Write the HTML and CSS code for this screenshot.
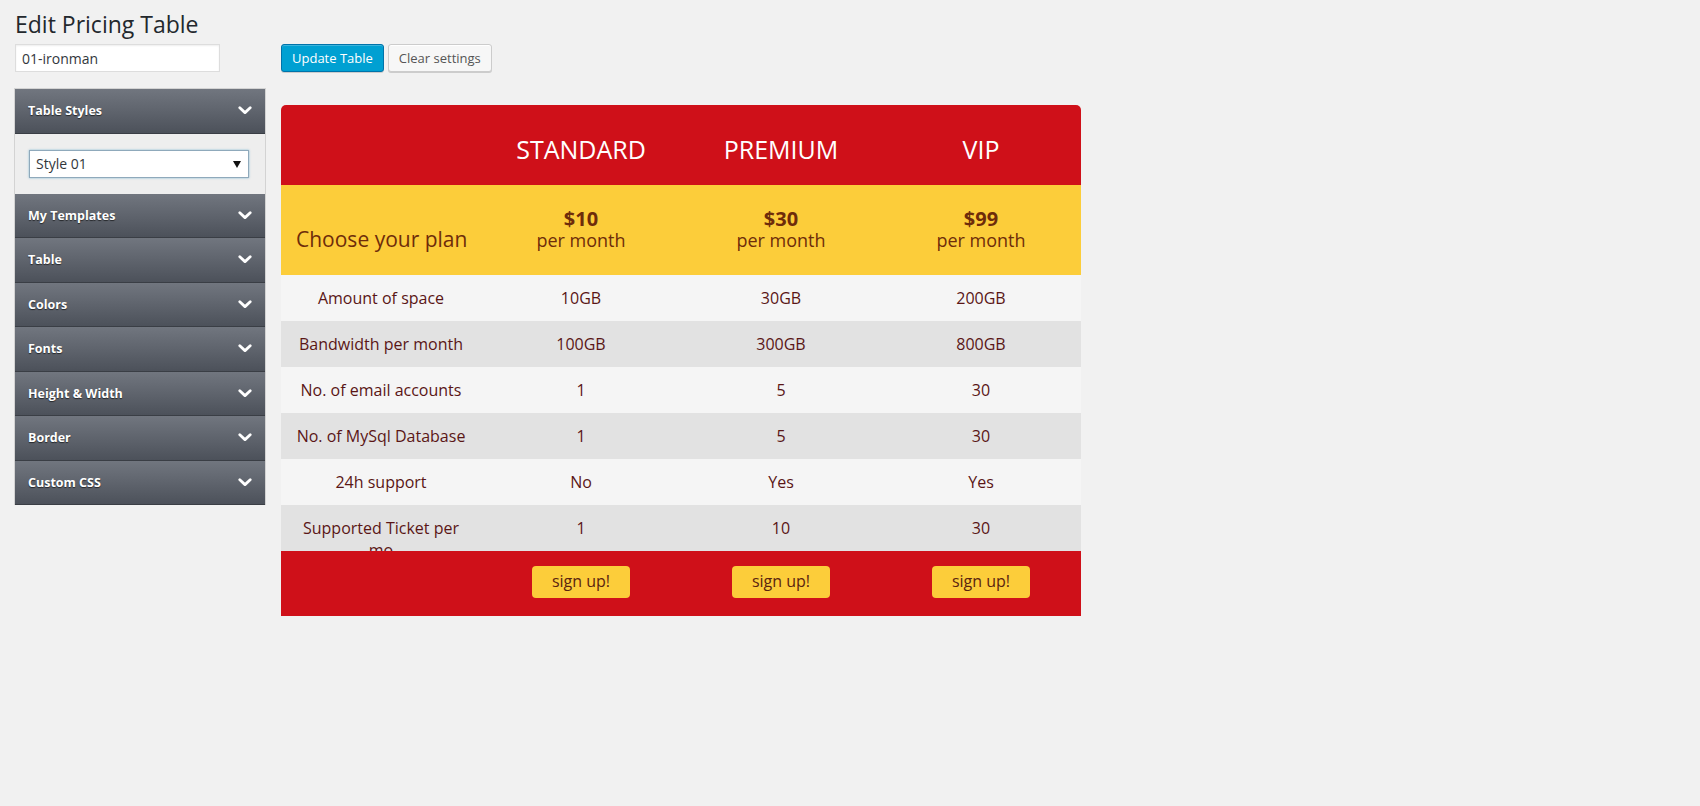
FILE: index.html
```html
<!DOCTYPE html>
<html lang="en">
<head>
<meta charset="utf-8">
<title>Edit Pricing Table</title>
<link rel="stylesheet" href="styles.css">
</head>
<body>
<div class="wrap">
  <h1 class="page-title">Edit Pricing Table</h1>
  <div class="editor">
    <div class="name-cell"><input class="name-input" type="text" value="01-ironman"></div>
    <div class="actions">
      <button class="btn btn-primary">Update Table</button>
      <button class="btn btn-secondary">Clear settings</button>
    </div>

    <aside class="sidebar">
      <div class="acc-head"><span>Table Styles</span><svg class="chev" viewBox="0 0 14 9"><path d="M1.8 1.8 L7 6.6 L12.2 1.8"/></svg></div>
      <div class="acc-body">
        <div class="select-wrap">
          <select class="style-select"><option>Style 01</option></select>
          <span class="select-arrow"></span>
        </div>
      </div>
      <div class="acc-head"><span>My Templates</span><svg class="chev" viewBox="0 0 14 9"><path d="M1.8 1.8 L7 6.6 L12.2 1.8"/></svg></div>
      <div class="acc-head"><span>Table</span><svg class="chev" viewBox="0 0 14 9"><path d="M1.8 1.8 L7 6.6 L12.2 1.8"/></svg></div>
      <div class="acc-head"><span>Colors</span><svg class="chev" viewBox="0 0 14 9"><path d="M1.8 1.8 L7 6.6 L12.2 1.8"/></svg></div>
      <div class="acc-head"><span>Fonts</span><svg class="chev" viewBox="0 0 14 9"><path d="M1.8 1.8 L7 6.6 L12.2 1.8"/></svg></div>
      <div class="acc-head"><span>Height &amp; Width</span><svg class="chev" viewBox="0 0 14 9"><path d="M1.8 1.8 L7 6.6 L12.2 1.8"/></svg></div>
      <div class="acc-head"><span>Border</span><svg class="chev" viewBox="0 0 14 9"><path d="M1.8 1.8 L7 6.6 L12.2 1.8"/></svg></div>
      <div class="acc-head"><span>Custom CSS</span><svg class="chev" viewBox="0 0 14 9"><path d="M1.8 1.8 L7 6.6 L12.2 1.8"/></svg></div>
    </aside>

    <div class="pricing">
      <div class="p-head">
        <div class="p-cell"></div>
        <div class="p-cell plan-name">STANDARD</div>
        <div class="p-cell plan-name">PREMIUM</div>
        <div class="p-cell plan-name">VIP</div>
      </div>
      <div class="p-price">
        <div class="p-cell choose">Choose your plan</div>
        <div class="p-cell price"><div class="amount">$10</div><div class="period">per month</div></div>
        <div class="p-cell price"><div class="amount">$30</div><div class="period">per month</div></div>
        <div class="p-cell price"><div class="amount">$99</div><div class="period">per month</div></div>
      </div>
      <div class="p-row light">
        <div class="p-cell">Amount of space</div><div class="p-cell">10GB</div><div class="p-cell">30GB</div><div class="p-cell">200GB</div>
      </div>
      <div class="p-row dark">
        <div class="p-cell">Bandwidth per month</div><div class="p-cell">100GB</div><div class="p-cell">300GB</div><div class="p-cell">800GB</div>
      </div>
      <div class="p-row light">
        <div class="p-cell">No. of email accounts</div><div class="p-cell">1</div><div class="p-cell">5</div><div class="p-cell">30</div>
      </div>
      <div class="p-row dark">
        <div class="p-cell">No. of MySql Database</div><div class="p-cell">1</div><div class="p-cell">5</div><div class="p-cell">30</div>
      </div>
      <div class="p-row light">
        <div class="p-cell">24h support</div><div class="p-cell">No</div><div class="p-cell">Yes</div><div class="p-cell">Yes</div>
      </div>
      <div class="p-row dark">
        <div class="p-cell">Supported Ticket per mo</div><div class="p-cell">1</div><div class="p-cell">10</div><div class="p-cell">30</div>
      </div>
      <div class="p-foot">
        <div class="p-cell"></div>
        <div class="p-cell"><a class="signup">sign up!</a></div>
        <div class="p-cell"><a class="signup">sign up!</a></div>
        <div class="p-cell"><a class="signup">sign up!</a></div>
      </div>
    </div>
  </div>
</div>
</body>
</html>
```

FILE: styles.css
```css
html, body {
  margin: 0;
  padding: 0;
  background: #f1f1f1;
  font-family: "Open Sans", "Liberation Sans", sans-serif;
  color: #444;
}

.wrap {
  padding: 9px 0 0 14px;
}

.page-title {
  margin: 0 0 5px 1px;
  font-size: 23px;
  line-height: 30px;
  font-weight: 400;
  color: #23282d;
}

.editor {
  display: grid;
  grid-template-columns: 252px 800px;
  column-gap: 15px;
  row-gap: 16px;
  align-items: start;
}

.name-input {
  display: block;
  box-sizing: border-box;
  margin: 0 0 0 1px;
  width: 205px;
  height: 28px;
  padding: 0 6px;
  border: 1px solid #ddd;
  background: #fff;
  box-shadow: inset 0 1px 2px rgba(0,0,0,0.07);
  font-family: "Open Sans", "Liberation Sans", sans-serif;
  font-size: 14px;
  color: #32373c;
  outline: none;
}

.actions {
  display: flex;
  gap: 4px;
  height: 28px;
}

.btn {
  box-sizing: border-box;
  height: 28px;
  padding: 0 10px 1px;
  border-radius: 3px;
  font-family: "Open Sans", "Liberation Sans", sans-serif;
  font-size: 13px;
  line-height: 26px;
  white-space: nowrap;
  cursor: pointer;
}

.btn-primary {
  background: #00a0d2;
  border: 1px solid #0073aa;
  color: #fff;
  box-shadow: inset 0 1px 0 rgba(120,200,230,0.5), 0 1px 0 rgba(0,0,0,0.15);
}

.btn-secondary {
  background: #f7f7f7;
  border: 1px solid #ccc;
  color: #555;
  box-shadow: inset 0 1px 0 #fff, 0 1px 0 #ccc;
}

/* Sidebar accordion */
.sidebar {
  border: 1px solid #d3d3d3;
  border-bottom: none;
  background: #eeeeee;
}

.acc-head {
  box-sizing: border-box;
  height: 44.5px;
  padding: 0 13px 0 13px;
  display: flex;
  align-items: center;
  justify-content: space-between;
  background: linear-gradient(to bottom, #71767f 0%, #5d626b 55%, #4c515a 100%);
  border-bottom: 1px solid #3a3e45;
  color: #fff;
  font-size: 12.5px;
  font-weight: 700;
  text-shadow: 0 1px 1px rgba(0,0,0,0.6);
}

.chev {
  width: 14px;
  height: 9px;
  fill: none;
  stroke: #fff;
  stroke-width: 2.8;
  stroke-linecap: round;
  stroke-linejoin: round;
}

.acc-body {
  height: 60px;
  box-sizing: border-box;
  padding: 16px 15px 0 14px;
  background: #eeeeee;
}

.select-wrap {
  position: relative;
  width: 220px;
}

.style-select {
  display: block;
  box-sizing: border-box;
  width: 220px;
  height: 28px;
  padding: 0 6px;
  -webkit-appearance: none;
  appearance: none;
  background: #fff;
  border: 1px solid #8fa9bb;
  box-shadow: 0 0 2px rgba(30,140,190,0.5);
  border-radius: 0;
  font-family: "Open Sans", "Liberation Sans", sans-serif;
  font-size: 14px;
  color: #32373c;
  outline: none;
}

.select-arrow {
  position: absolute;
  right: 8px;
  top: 11px;
  width: 0;
  height: 0;
  border-left: 4px solid transparent;
  border-right: 4px solid transparent;
  border-top: 7px solid #111;
}

/* Pricing table */
.pricing {
  margin-top: 17px;
  width: 800px;
  border-radius: 5px 5px 0 0;
  overflow: hidden;
}

.p-head, .p-price, .p-row, .p-foot {
  display: grid;
  grid-template-columns: repeat(4, 200px);
}

.p-cell {
  box-sizing: border-box;
  text-align: center;
}

.p-head {
  height: 80px;
  background: #cf1019;
}

.plan-name {
  padding-top: 27px;
  font-size: 25px;
  line-height: 34px;
  color: #fff;
}

.p-price {
  height: 90px;
  background: #fccd3a;
  color: #6e2c0a;
}

.choose {
  text-align: left;
  padding: 40px 0 0 15px;
  font-size: 21px;
  line-height: 28px;
}

.price {
  padding-top: 22px;
}

.amount {
  font-size: 20px;
  line-height: 23px;
  font-weight: 700;
}

.period {
  font-size: 18px;
  line-height: 20px;
}

.p-row {
  height: 46px;
  overflow: hidden;
  color: #5a1616;
  font-size: 16px;
}

.p-row .p-cell {
  padding: 12px 14px 0;
  line-height: 22px;
  height: 46px;
  overflow: hidden;
}

.p-row.light { background: #f5f5f5; }
.p-row.dark { background: #e2e2e2; }

.p-foot {
  height: 65px;
  background: #cf1019;
}

.p-foot .p-cell {
  display: flex;
  align-items: center;
  justify-content: center;
  padding-bottom: 3px;
}

.signup {
  box-sizing: border-box;
  display: block;
  width: 98px;
  height: 32px;
  border-radius: 4px;
  background: #fccd3a;
  color: #5a2410;
  font-size: 16px;
  line-height: 31px;
  text-align: center;
  cursor: pointer;
}
```
